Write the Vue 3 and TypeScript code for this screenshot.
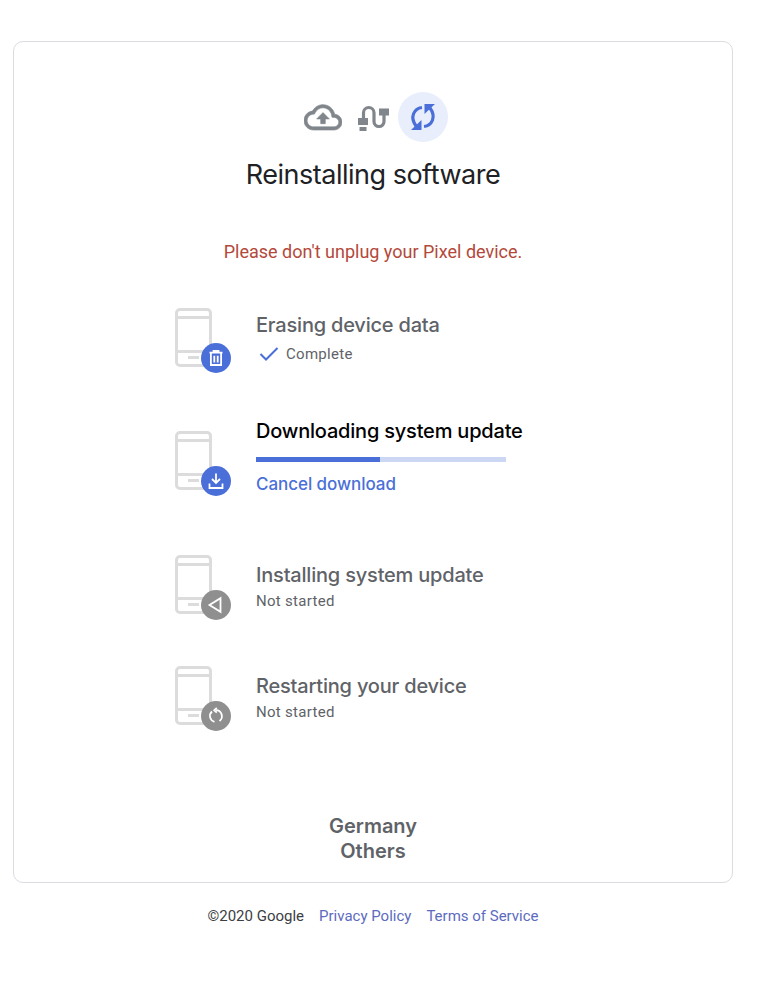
<script setup lang="ts">
interface Step {
  title: string
  sub: string
  badge: 'trash' | 'download' | 'back' | 'restart'
  cls: string
}
const steps: Step[] = [
  { title: 'Erasing device data', sub: 'Complete', badge: 'trash', cls: 'done' },
  { title: 'Downloading system update', sub: '', badge: 'download', cls: 'active' },
  { title: 'Installing system update', sub: 'Not started', badge: 'back', cls: 'idle' },
  { title: 'Restarting your device', sub: 'Not started', badge: 'restart', cls: 'idle' },
]
</script>

<template>
  <div class="page">
    <main class="card">
      <div class="stages">
        <svg class="cloud" width="38" height="27" viewBox="0 3.6 24 17" fill="#80868b" stroke="#80868b" stroke-width="0.4">
          <path d="M19.35 10.04C18.67 6.59 15.64 4 12 4 9.11 4 6.6 5.64 5.35 8.04 2.34 8.36 0 10.91 0 14c0 3.31 2.69 6 6 6h13c2.76 0 5-2.24 5-5 0-2.64-2.05-4.78-4.65-4.96zM19 18H6c-2.21 0-4-1.79-4-4 0-2.05 1.53-3.76 3.56-3.97l1.07-.11.5-.95C8.08 7.14 9.94 6 12 6c2.62 0 4.88 1.86 5.39 4.43l.3 1.5 1.53.11c1.56.1 2.78 1.41 2.78 2.96 0 1.65-1.35 3-3 3zM8 13h2.55v3h2.9v-3H16l-4-4z" />
        </svg>
        <svg class="cable" width="32" height="28" viewBox="0 0 32 28" fill="none">
          <path d="M5.500 15V9.750a5.250 5.250 0 0 1 10.500 0V18.500a5 5 0 0 0 10 0V12" stroke="#80868b" stroke-width="3.200" />
          <path d="M0 15h10v7H0zM1.500 24h7v4h-7zM21 5.500h10v7H21z" fill="#80868b" />
        </svg>
        <span class="sync">
          <svg width="30" height="30" viewBox="0 0 30 30" fill="none" stroke="#4a6fd8" stroke-width="3.200">
            <path d="M14 5.500C6 6.500 1.500 15 8 24" />
            <path d="M16 24.500C24 23.500 28.500 15 22 6" />
            <path d="M3 28h10.500V18z" fill="#4a6fd8" stroke="none" />
            <path d="M27 2H16.500v10z" fill="#4a6fd8" stroke="none" />
          </svg>
        </span>
      </div>
      <h1 class="title">Reinstalling software</h1>
      <p class="warning">Please don't unplug your Pixel device.</p>

      <div class="steps">
        <section v-for="s in steps" :key="s.title" class="step" :class="s.cls">
          <div class="art">
            <svg class="phone" width="37" height="59" viewBox="0 0 37 59" fill="none" stroke="#dcdcdc" stroke-width="3">
              <rect x="1.500" y="1.500" width="34" height="56" rx="3.500" />
              <path d="M1.500 9.500h34M1.500 43.500h34M13 49.500h11" />
            </svg>
            <span class="badge">
              <svg v-if="s.badge === 'trash'" width="18" height="18" viewBox="0 0 18 18" fill="none" stroke="#fff" stroke-width="1.800">
                <path d="M2.500 3.600h13M6.500 3.200V1.800h5v1.400M3.900 4v12h10.200V4M7.300 6.800v6.800M10.700 6.800v6.800" />
              </svg>
              <svg v-else-if="s.badge === 'download'" width="18" height="18" viewBox="0 0 18 18" fill="none" stroke="#fff" stroke-width="1.800">
                <path d="M9 1.500v9M5 7l4 4 4-4M2.500 11.500v4.500h13v-4.500" />
              </svg>
              <svg v-else-if="s.badge === 'back'" width="18" height="18" viewBox="0 0 18 18" fill="none" stroke="#fff" stroke-width="1.800">
                <path d="M13.500 2.200v13.600L2.500 9z" />
              </svg>
              <svg v-else width="18" height="18" viewBox="0 0 18 18" fill="none" stroke="#fff" stroke-width="1.800">
                <path d="M9 3.200A6 6 0 0 1 12.500 14" />
                <path d="M7.500 14.800A6 6 0 0 1 5 4.500" />
                <path d="M9.800.8 7.200 3.200l2.600 2.400" />
              </svg>
            </span>
          </div>
          <div class="copy">
            <h2 class="step-title">{{ s.title }}</h2>
            <template v-if="s.cls === 'active'">
              <div class="bar"><div class="fill" :style="{ width: '49.6%' }"></div></div>
              <a class="cancel">Cancel download</a>
            </template>
            <p v-else class="sub">
              <svg v-if="s.cls === 'done'" class="check" width="20" height="14" viewBox="0 0 20 14" fill="none" stroke="#4a6fd8" stroke-width="2">
                <path d="M1.500 7 7 12.500 18.500 1" />
              </svg>
              {{ s.sub }}
            </p>
          </div>
        </section>
      </div>

      <div class="region">
        <div>Germany</div>
        <div>Others</div>
      </div>
    </main>
    <footer class="footer">
      <span>©2020 Google</span>
      <a>Privacy Policy</a>
      <a>Terms of Service</a>
    </footer>
  </div>
</template>

<style>
html, body { margin: 0; background: #fff; }
</style>

<style scoped>
.page {
  width: 773px;
  height: 994px;
  padding: 41px 40px 0 13px;
  box-sizing: border-box;
  font-family: Roboto, sans-serif;
  overflow: hidden;
}
.card {
  width: 720px;
  height: 842px;
  box-sizing: border-box;
  border: 1px solid #dadce0;
  border-radius: 10px;
  padding-top: 50px;
  display: flex;
  flex-direction: column;
  align-items: center;
}
.stages {
  display: flex;
  align-items: center;
  height: 50px;
  margin-left: 6px;
  flex-shrink: 0;
}
.cable { margin-left: 16px; }
.sync {
  width: 50px;
  height: 50px;
  margin-left: 8px;
  border-radius: 50%;
  background: #e8eefb;
  display: flex;
  align-items: center;
  justify-content: center;
}
.title {
  margin: 15px 0 0;
  font: 400 27px/36px Inter, sans-serif;
  letter-spacing: -0.5px;
  color: #202124;
}
.warning {
  margin: 47px 0 0;
  font: 400 18px/24px Roboto, sans-serif;
  color: #b3493b;
}
.steps {
  align-self: stretch;
  margin-top: 44px;
  padding-left: 161px;
  display: flex;
  flex-direction: column;
}
.step {
  display: grid;
  grid-template-columns: 81px 1fr;
  height: 111px;
}
.step.active { height: 136px; }
.art {
  position: relative;
  width: 56px;
  height: 65px;
}
.active .art { margin-top: 12px; }
.phone { display: block; }
.badge {
  position: absolute;
  left: 26px;
  top: 35px;
  width: 30px;
  height: 30px;
  border-radius: 50%;
  background: #8f8f8f;
  display: flex;
  align-items: center;
  justify-content: center;
}
.done .badge, .active .badge { background: #4a6fd8; }
.copy { padding-top: 8px; }
.done .copy { padding-top: 5px; }
.active .copy { padding-top: 0; }
.step-title {
  margin: 0;
  font: 500 20px/24px Inter, sans-serif;
  letter-spacing: -0.2px;
  color: #5f6368;
}
.active .step-title { color: #000; }
.sub {
  margin: 2px 0 0;
  font: 400 15px/24px Roboto, sans-serif;
  letter-spacing: 0.3px;
  color: #5f6368;
  display: flex;
  align-items: center;
}
.done .sub { margin-top: 5px; }
.check { margin: 0 7px 0 3px; }
.bar {
  width: 250px;
  height: 5px;
  margin-top: 14px;
  background: #ccd7f3;
}
.fill { height: 100%; background: #4a6fd8; }
.cancel {
  display: block;
  margin-top: 10px;
  font: 500 17px/24px Inter, sans-serif;
  letter-spacing: -0.05px;
  color: #4a6fd8;
}
.region {
  margin-top: 37px;
  font: 600 20px/25px Inter, sans-serif;
  color: #5f6368;
  text-align: center;
}
.footer {
  width: 720px;
  margin-top: 23px;
  display: flex;
  justify-content: center;
  gap: 15px;
  font-size: 15px;
  line-height: 20px;
  color: #3c4043;
}
.footer a { color: #5c6bc0; }
</style>
